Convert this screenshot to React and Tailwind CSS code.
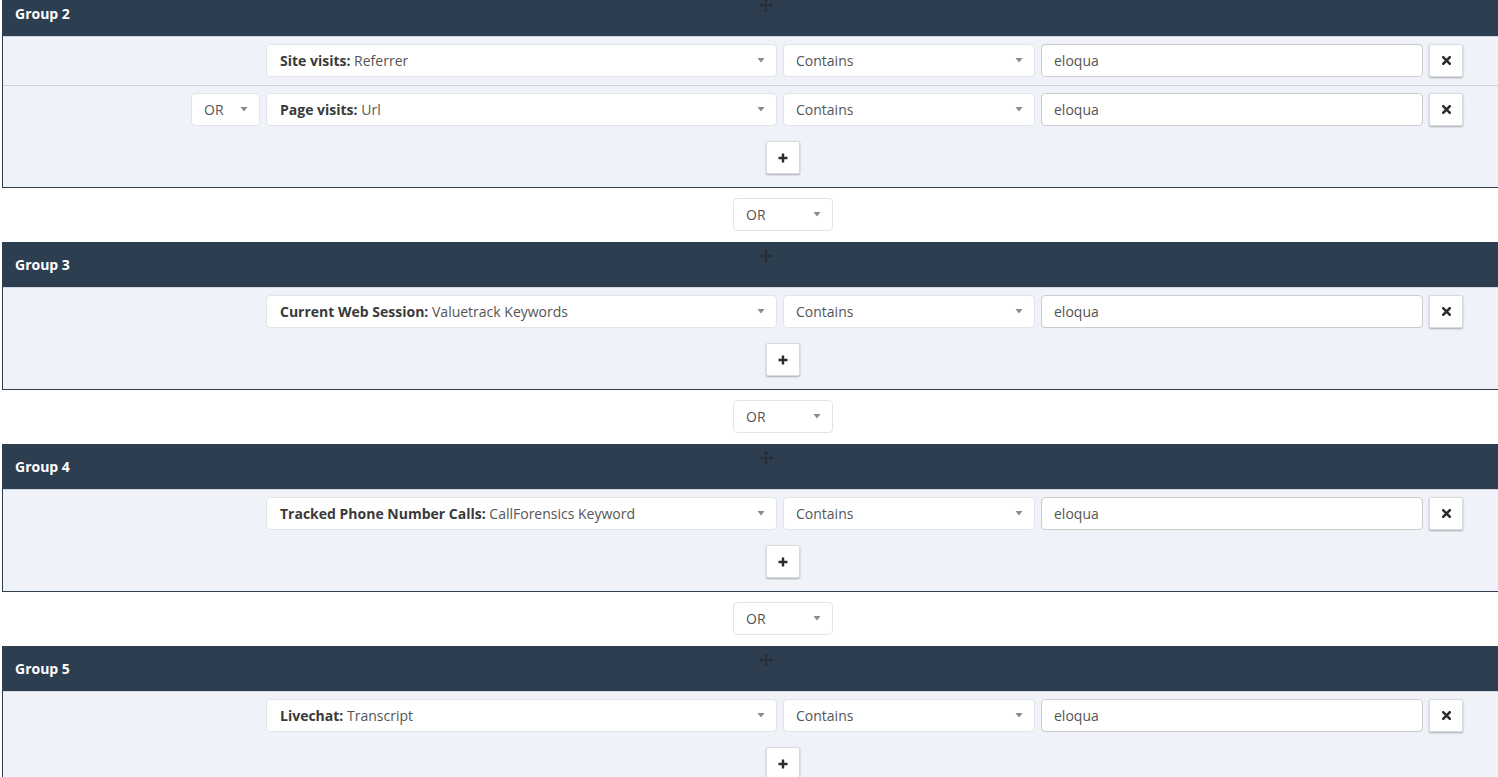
import React from "react";

const Caret = () => (
  <svg width="8" height="5" viewBox="0 0 8 5" className="shrink-0">
    <path d="M0.5 0 L7.5 0 L4 4.5 Z" fill="#8a8a8a" />
  </svg>
);

const MoveIcon = () => (
  <svg width="14" height="14" viewBox="0 0 14 14">
    <path d="M7 1.5 V12.5 M1.5 7 H12.5" stroke="#2a2c30" strokeWidth="1.6" />
    <path d="M7 0 L9.5 2.8 H4.5 Z M7 14 L9.5 11.2 H4.5 Z M0 7 L2.8 4.5 V9.5 Z M14 7 L11.2 4.5 V9.5 Z" fill="#2a2c30" />
  </svg>
);

const XIcon = () => (
  <svg width="9" height="9" viewBox="0 0 9 9">
    <path d="M1.3 1.3 L7.7 7.7 M7.7 1.3 L1.3 7.7" stroke="#2b2b2b" strokeWidth="2.6" strokeLinecap="square" />
  </svg>
);

const PlusIcon = () => (
  <svg width="10" height="10" viewBox="0 0 10 10">
    <path d="M5 0.5 V9.5 M0.5 5 H9.5" stroke="#2b2b2b" strokeWidth="2.4" />
  </svg>
);

const Select = ({ className, children }) => (
  <div
    className={
      "h-[33px] flex items-center justify-between bg-white border border-[#e2e4e8] rounded-[4px] pl-[12px] pr-[11px] text-[14px] text-[#555] " +
      className
    }
  >
    <span className="truncate">{children}</span>
    <Caret />
  </div>
);

const Btn = ({ children }) => (
  <button className="w-[34px] h-[33px] flex items-center justify-center bg-white border border-[#d9dbde] rounded-[2px] shadow-[0_1px_2px_rgba(0,0,0,0.3)]">
    {children}
  </button>
);

const Row = ({ row, last }) => (
  <div
    className={
      "flex items-center gap-[6px] pt-[7px] pb-[8px] " +
      (last ? "" : "border-b border-[#cfd3da]")
    }
  >
    <div className="w-[257px] flex justify-end">
      {row.or && <Select className="w-[69px]">OR</Select>}
    </div>
    <Select className="w-[511px] pl-[13px]">
      <span className="font-bold text-[#3a3a3a]">{row.label}</span> {row.value}
    </Select>
    <Select className="w-[252px]">Contains</Select>
    <div className="w-[382px] h-[33px] flex items-center bg-white border border-[#cccccc] rounded-[4px] px-[12px] text-[14px] text-[#555]">
      eloqua
    </div>
    <Btn>
      <XIcon />
    </Btn>
  </div>
);

const Group = ({ title, rows }) => (
  <div className="ml-[2px] border-l border-b border-[#2d3e50] w-[1520px]">
    <div className="relative h-[45px] bg-[#2d3e50] flex items-center pl-[12px] text-white font-bold text-[14px]">
      {title}
      <div className="absolute left-[756px] top-[7px]">
        <MoveIcon />
      </div>
    </div>
    <div className="bg-[#eff2f9] border-t border-[#d3d8e0]">
      {rows.map((r, i) => (
        <Row key={i} row={r} last={i === rows.length - 1} />
      ))}
      <div className="pt-[7px] pb-[13px] pl-[763px]">
        <Btn>
          <PlusIcon />
        </Btn>
      </div>
    </div>
  </div>
);

const OrBetween = () => (
  <div className="pt-[10px] pb-[11px] pl-[733px]">
    <Select className="w-[100px] border-[#dcdcdc]">OR</Select>
  </div>
);

const groups = [
  {
    title: "Group 2",
    rows: [
      { or: false, label: "Site visits:", value: "Referrer" },
      { or: true, label: "Page visits:", value: "Url" },
    ],
  },
  {
    title: "Group 3",
    rows: [{ label: "Current Web Session:", value: "Valuetrack Keywords" }],
  },
  {
    title: "Group 4",
    rows: [{ label: "Tracked Phone Number Calls:", value: "CallForensics Keyword" }],
  },
  {
    title: "Group 5",
    rows: [{ label: "Livechat:", value: "Transcript" }],
  },
];

export default function App() {
  return (
    <div
      className="w-[1498px] h-[777px] overflow-hidden bg-white"
      style={{ fontFamily: '"Open Sans", "Noto Sans", sans-serif' }}
    >
      <div className="-mt-[9px]">
        {groups.map((g, i) => (
          <React.Fragment key={g.title}>
            {i > 0 && <OrBetween />}
            <Group title={g.title} rows={g.rows} />
          </React.Fragment>
        ))}
      </div>
    </div>
  );
}
